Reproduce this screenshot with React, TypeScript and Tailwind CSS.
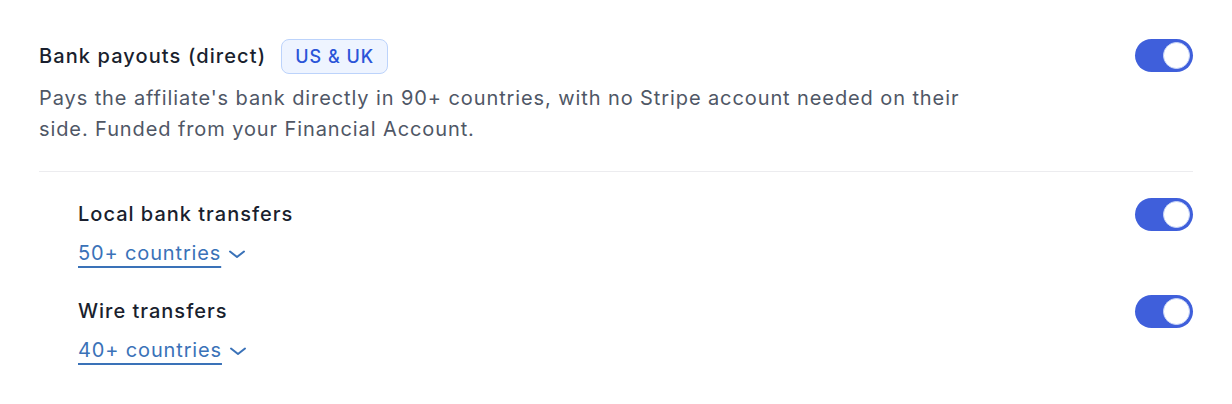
const Toggle = () => (
  <div className="w-[58px] h-[33px] rounded-full bg-[#3f5fdb] flex items-center justify-end pr-[3px] shrink-0">
    <span className="w-[27px] h-[27px] rounded-full bg-white border border-[#c9d6f7]" />
  </div>
);

const Chevron = () => (
  <svg width="18" height="18" viewBox="0 0 18 18" fill="none" className="ml-[7px] mt-[2px]">
    <path d="M2 6.5l7 5.5 7-5.5" stroke="#3a72b8" strokeWidth="2" strokeLinecap="round" strokeLinejoin="round" />
  </svg>
);

const SubOption = ({ title, countries }: { title: string; countries: string }) => (
  <div className="flex items-start justify-between">
    <div className="flex flex-col gap-[11px]">
      <div className="text-[20px] leading-[28px] font-medium text-[#1a1f2e]">{title}</div>
      <button className="flex items-center text-[20px] leading-[28px] text-[#3a72b8] tracking-[0.85px]">
        <span className="underline underline-offset-[6px] decoration-[1.5px]">{countries}</span>
        <Chevron />
      </button>
    </div>
    <div className="mt-[-2px]">
      <Toggle />
    </div>
  </div>
);

export default function App() {
  return (
    <div
      className="w-[1232px] h-[404px] bg-white px-[39px] pt-[39px] tracking-[1px]"
      style={{ fontFamily: "Inter, 'Noto Sans', sans-serif" }}
    >
      <div className="flex items-start justify-between">
        <div className="flex items-center gap-[15px]">
          <h2 className="text-[20px] leading-[35px] font-medium text-[#1a1f2e] tracking-[1.1px]">Bank payouts (direct)</h2>
          <span className="h-[35px] px-[13px] flex items-center rounded-[8px] bg-[#eef4ff] border border-[#bcd3fb] text-[18px] font-medium text-[#2b55d8]">
            US &amp; UK
          </span>
        </div>
        <Toggle />
      </div>
      <p className="mt-[9px] max-w-[940px] text-[20px] leading-[31px] text-[#4f5766] tracking-[0.9px]">
        Pays the affiliate's bank directly in 90+ countries, with no Stripe account needed on their side. Funded from your Financial Account.
      </p>
      <div className="mt-[26px] border-t border-[#ececef]" />
      <div className="pl-[39px] pt-[28px] flex flex-col gap-[30px]">
        <SubOption title="Local bank transfers" countries="50+ countries" />
        <SubOption title="Wire transfers" countries="40+ countries" />
      </div>
    </div>
  );
}
